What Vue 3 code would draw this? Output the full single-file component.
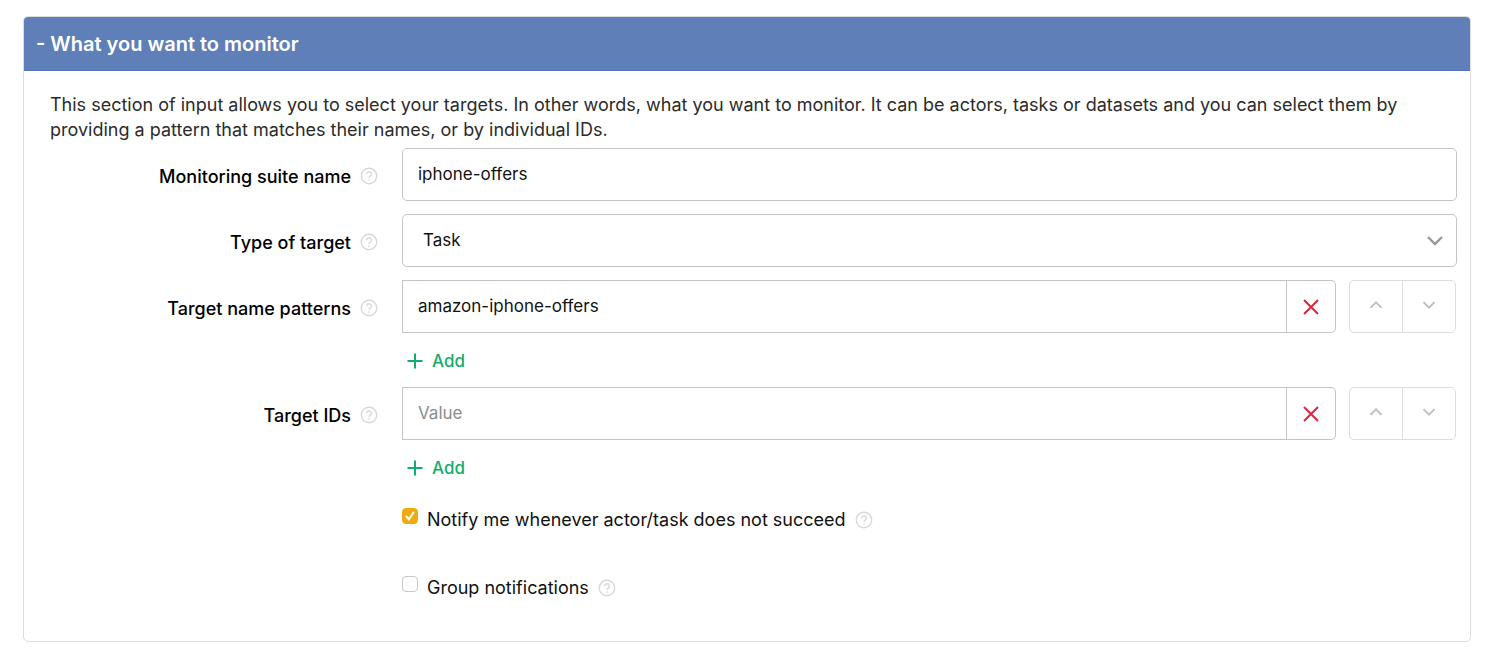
<script setup>
import { ref } from 'vue'

const open = ref(true)
const suiteName = ref('iphone-offers')
const targetType = ref('Task')
const lists = ref([
  { id: 'patterns', label: 'Target name patterns', values: ['amazon-iphone-offers'] },
  { id: 'ids', label: 'Target IDs', values: [''] },
])
const options = ref([
  { id: 'notify', label: 'Notify me whenever actor/task does not succeed', checked: true },
  { id: 'group', label: 'Group notifications', checked: false },
])

function move(values, from, to) {
  if (to < 0 || to >= values.length) return
  values.splice(to, 0, values.splice(from, 1)[0])
}
</script>

<template>
  <main class="page">
    <section class="panel">
      <h2 class="heading">
        <button type="button" class="toggle" :aria-expanded="open" @click="open = !open">
          {{ open ? '-' : '+' }} What you want to monitor
        </button>
      </h2>
      <form v-if="open" class="body" @submit.prevent>
        <p class="intro">
          This section of input allows you to select your targets. In other words, what you want to monitor. It can be
          actors, tasks or datasets and you can select them by providing a pattern that matches their names, or by
          individual IDs.
        </p>

        <div class="row">
          <div class="caption">
            <label for="suite">Monitoring suite name</label>
            <svg class="help" viewBox="0 0 18 18" aria-hidden="true">
              <circle cx="9" cy="9" r="7.7" />
              <path d="M6.600 7.200a2.400 2.400 0 1 1 3.700 2C9.400 9.700 9 10 9 10.900M9 12.300v1.400" />
            </svg>
          </div>
          <input id="suite" v-model="suiteName" class="field" type="text" />
        </div>

        <div class="row">
          <div class="caption">
            <label for="type">Type of target</label>
            <svg class="help" viewBox="0 0 18 18" aria-hidden="true">
              <circle cx="9" cy="9" r="7.7" />
              <path d="M6.600 7.200a2.400 2.400 0 1 1 3.700 2C9.400 9.700 9 10 9 10.900M9 12.300v1.400" />
            </svg>
          </div>
          <div class="select-box">
            <select id="type" v-model="targetType" class="field select">
              <option>Actor</option>
              <option>Task</option>
              <option>Dataset</option>
            </select>
            <svg class="arrow" viewBox="0 0 16 10" aria-hidden="true"><path d="M1 1l7 7 7-7" /></svg>
          </div>
        </div>

        <div v-for="list in lists" :key="list.id" class="row">
          <div class="caption">
            <label :for="list.id + '-0'">{{ list.label }}</label>
            <svg class="help" viewBox="0 0 18 18" aria-hidden="true">
              <circle cx="9" cy="9" r="7.7" />
              <path d="M6.600 7.200a2.400 2.400 0 1 1 3.700 2C9.400 9.700 9 10 9 10.900M9 12.300v1.400" />
            </svg>
          </div>
          <div class="list">
            <div v-for="(value, i) in list.values" :key="i" class="item">
              <input :id="list.id + '-' + i" v-model="list.values[i]" class="field entry" type="text" placeholder="Value" />
              <button type="button" class="remove" aria-label="Remove" @click="list.values.splice(i, 1)">
                <svg viewBox="0 0 16 16" aria-hidden="true"><path d="M1 1l14 14M15 1L1 15" /></svg>
              </button>
              <div class="order">
                <button type="button" aria-label="Move up" @click="move(list.values, i, i - 1)">
                  <svg viewBox="0 0 12 8" aria-hidden="true"><path d="M.5 6.900L6 1.400l5.500 5.500" /></svg>
                </button>
                <button type="button" aria-label="Move down" @click="move(list.values, i, i + 1)">
                  <svg viewBox="0 0 12 8" aria-hidden="true"><path d="M.5 1.100L6 6.600l5.500-5.500" /></svg>
                </button>
              </div>
            </div>
            <button type="button" class="add" @click="list.values.push('')">
              <svg viewBox="0 0 16 16" aria-hidden="true"><path d="M8 .5v15M.5 8h15" /></svg>
              Add
            </button>
          </div>
        </div>

        <div class="checks">
          <div v-for="option in options" :key="option.id" class="check">
            <input :id="option.id" v-model="option.checked" class="box" type="checkbox" />
            <svg v-if="option.checked" class="tick" viewBox="0 0 16 16" aria-hidden="true"><path d="M4.400 8.500l2.500 2.900 4.600-6.900" /></svg>
            <label :for="option.id">{{ option.label }}</label>
            <svg class="help" viewBox="0 0 18 18" aria-hidden="true">
              <circle cx="9" cy="9" r="7.7" />
              <path d="M6.600 7.200a2.400 2.400 0 1 1 3.700 2C9.400 9.700 9 10 9 10.900M9 12.300v1.400" />
            </svg>
          </div>
        </div>
      </form>
    </section>
  </main>
</template>

<style>
body {
  background: #fff;
}
</style>

<style scoped>
* {
  box-sizing: border-box;
}
.page {
  padding: 16px 29px 11px 23px;
  font-family: Inter, "Liberation Sans", sans-serif;
  font-size: 17px;
  color: #111;
}
button,
input,
select {
  font: inherit;
  color: inherit;
}
button {
  display: flex;
  align-items: center;
  padding: 0;
  border: 0;
  background: none;
  cursor: pointer;
}
svg {
  display: block;
  flex: none;
  fill: none;
  stroke: currentColor;
}
.panel {
  border: 1px solid #ddd;
  border-radius: 5px;
  overflow: hidden;
}
.heading {
  margin: 0;
  background: #5e7fb8;
  border-bottom: 1px solid #4f74b3;
}
.toggle {
  width: 100%;
  height: 53px;
  padding: 1px 12px 0;
  font-size: 20px;
  font-weight: 600;
  color: #fff;
}
.body {
  padding: 21px 13px 41px;
}
.intro {
  margin: 0 0 6px;
  padding: 0 13px;
  line-height: 25px;
  font-size: 18px;
  color: #2b2b2b;
}
.row {
  display: grid;
  grid-template-columns: 341px minmax(0, 1fr);
  column-gap: 24px;
  margin-bottom: 13px;
}
.caption {
  display: flex;
  align-items: center;
  justify-content: flex-end;
  gap: 9px;
  height: 56px;
  margin-bottom: -3px;
  font-size: 18px;
  font-weight: 500;
  color: #000;
}
.help {
  width: 18px;
  height: 18px;
  color: #d8d8d8;
  stroke-width: 1.4;
}
.field {
  width: 100%;
  height: 53px;
  margin: 0;
  padding: 0 15px 2px;
  border: 1px solid #c4c4c4;
  border-radius: 5px;
  outline: 0;
  background: #fff;
}
.field::placeholder {
  color: #8c8c8c;
  opacity: 1;
}
.select-box {
  display: grid;
  align-items: center;
}
.select-box > * {
  grid-area: 1 / 1;
}
.select {
  appearance: none;
  padding-left: 20px;
}
.arrow {
  width: 16px;
  height: 10px;
  justify-self: end;
  margin-right: 14px;
  color: #999;
  stroke-width: 2.4;
  pointer-events: none;
}
.item {
  display: flex;
}
.entry {
  flex: 1;
  width: auto;
  min-width: 0;
  border-radius: 0;
}
.remove {
  justify-content: center;
  width: 49px;
  height: 53px;
  border: 1px solid #c4c4c4;
  border-left: 0;
  border-radius: 0 5px 5px 0;
  color: #e0243c;
}
.remove svg {
  width: 16px;
  height: 16px;
  stroke-width: 2;
}
.order {
  display: flex;
  margin: 0 1px 0 13px;
  border: 1px solid #dcdcdc;
  border-radius: 5px;
}
.order button {
  justify-content: center;
  width: 52px;
  padding-bottom: 4px;
  color: #c0c0c0;
}
.order button + button {
  width: 53px;
  border-left: 1px solid #dcdcdc;
}
.order svg {
  width: 12px;
  height: 8px;
  stroke-width: 2;
}
.add {
  gap: 9px;
  height: 27px;
  margin: 14px 0 0 5px;
  font-weight: 500;
  color: #12ad6b;
}
.add svg {
  width: 16px;
  height: 16px;
  stroke-width: 2;
}
.checks {
  display: grid;
  gap: 42px;
  margin: 25px 0 0 365px;
}
.check {
  display: grid;
  grid-template-columns: 16px auto auto;
  justify-content: start;
  align-items: center;
  height: 26px;
}
.check label {
  margin: 0 9px;
  font-size: 18px;
}
.box {
  grid-area: 1 / 1;
  appearance: none;
  width: 16px;
  height: 16px;
  margin: 0 0 6px;
  border: 1px solid #c6c6c6;
  border-radius: 4px;
  background: #fff;
}
.box:checked {
  border-color: #eda810;
  background: #f0ab12;
}
.tick {
  grid-area: 1 / 1;
  width: 16px;
  height: 16px;
  margin-bottom: 6px;
  color: #fff;
  stroke-width: 2;
  stroke-linecap: round;
  pointer-events: none;
}
.check .help {
  margin-top: 2px;
}
</style>
